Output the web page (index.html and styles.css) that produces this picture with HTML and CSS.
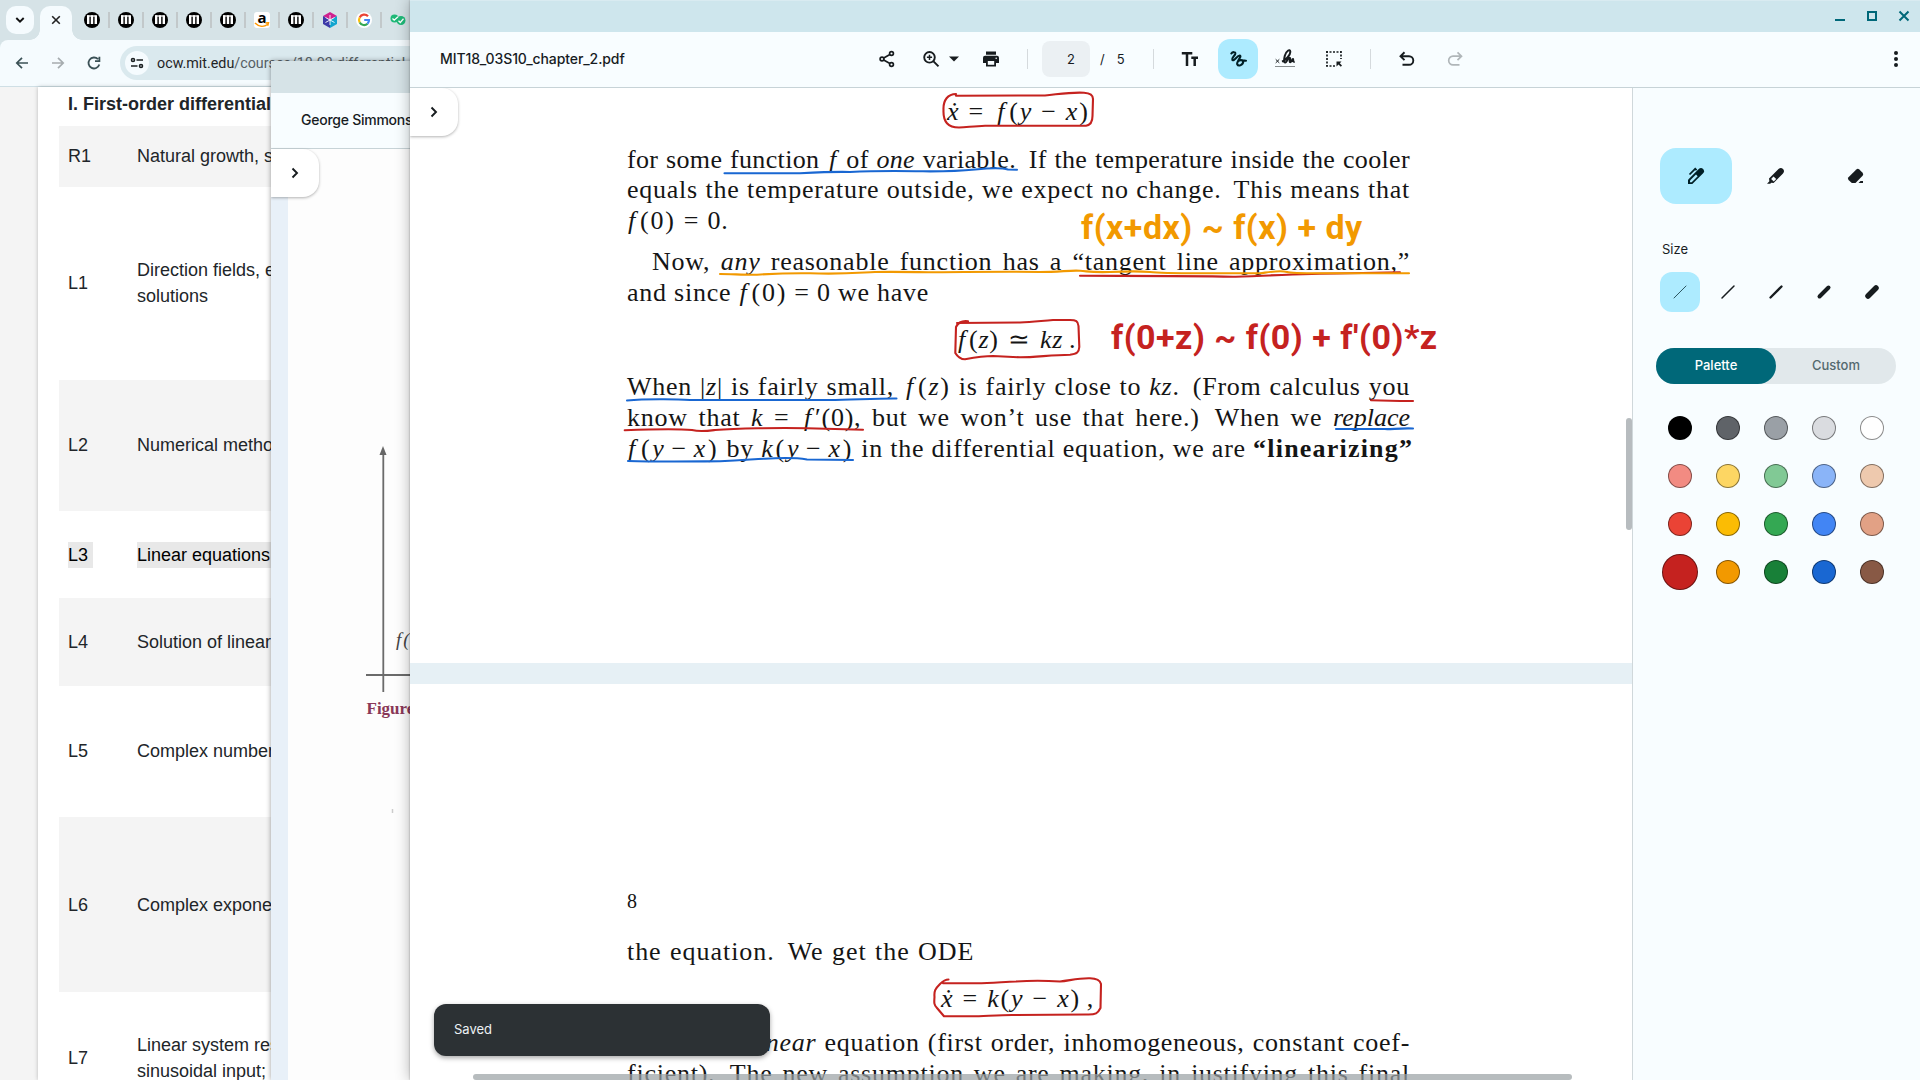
FILE: index.html
```html
<!DOCTYPE html>
<html lang="en">
<head>
<meta charset="utf-8">
<title>MIT18_03S10_chapter_2.pdf</title>
<link rel="stylesheet" href="styles.css">
</head>
<body>
<svg class="defs" width="0" height="0" aria-hidden="true">
  <symbol id="mit" viewBox="0 0 16 16"><circle cx="8" cy="8" r="8" fill="#000"/><path d="M4.200 3.300v8.700M8 3.300v8.700M11.800 3.300v8.700" stroke="#fff" stroke-width="2.400"/><path d="M3.100 4h8.500" stroke="#fff" stroke-width="1.200"/></symbol>
  <symbol id="chev" viewBox="0 0 16 16"><path d="M5.500 3.500l4.500 4.500L5.500 12.500" fill="none" stroke="#171c1f" stroke-width="1.900"/></symbol>
</svg>
<main class="desktop">

  <section class="window browser">
    <header class="tabs">
      <button class="tab-search"><svg width="10" height="10" viewBox="0 0 10 10"><path d="M1.300 3l3.700 3.700L8.700 3" fill="none" stroke="#111" stroke-width="1.900"/></svg></button>
      <div class="tab-active"><svg width="10" height="10" viewBox="0 0 10 10"><path d="M1.200 1.200l7.600 7.600M8.800 1.200L1.200 8.800" stroke="#222" stroke-width="1.600"/></svg></div>
      <div class="favs">
        <span><svg width="16" height="16"><use href="#mit"/></svg></span>
        <span><svg width="16" height="16"><use href="#mit"/></svg></span>
        <span><svg width="16" height="16"><use href="#mit"/></svg></span>
        <span><svg width="16" height="16"><use href="#mit"/></svg></span>
        <span><svg width="16" height="16"><use href="#mit"/></svg></span>
        <span><b class="amazon">a<svg width="16" height="6" viewBox="0 0 16 6"><path d="M1 1c4 4 9 4 12.500 1.500M11.500 1l3-.3-.8 3" fill="none" stroke="#f90" stroke-width="1.400"/></svg></b></span>
        <span><svg width="16" height="16"><use href="#mit"/></svg></span>
        <span><svg width="16" height="16" viewBox="0 0 16 16"><path d="M8 0l7 4-7 4-7-4z" fill="#d0218f"/><path d="M1 4l7 4v8l-7-4z" fill="#3d3aa8"/><path d="M15 4L8 8v8l7-4z" fill="#12a5cf"/><path d="M8 3v10M3.500 5.500l9 5M12.500 5.500l-9 5" stroke="#fff" stroke-width=".9"/></svg></span>
        <span><svg width="16" height="16" viewBox="0 0 16 16"><circle cx="8" cy="8" r="8" fill="#fff"/><g fill="none" stroke-width="2.200"><path d="M12 4.300A5 5 0 0 0 3.700 5.500" stroke="#ea4335"/><path d="M3.700 5.500a5 5 0 0 0 0 5" stroke="#fbbc04"/><path d="M3.700 10.500a5 5 0 0 0 7.800 1.200" stroke="#34a853"/><path d="M11.500 11.700A5 5 0 0 0 13 8H8.200" stroke="#4285f4"/></g></svg></span>
        <span><svg width="16" height="12" viewBox="0 0 16 12"><circle cx="4.500" cy="4.500" r="4" fill="#1fb978"/><circle cx="11" cy="6.500" r="4.500" fill="#1fb978"/><path d="M2.500 4.500l1.700 1.700L8 2.700M8.500 6.700l1.800 1.800 3.200-3.700" fill="none" stroke="#fff" stroke-width="1.300"/></svg></span>
      </div>
    </header>
    <nav class="address">
      <div class="nav-icons">
        <svg width="16" height="16" viewBox="0 0 16 16"><path d="M14 8H3M8 2.800L2.800 8 8 13.200" fill="none" stroke="#3b5156" stroke-width="1.700"/></svg>
        <svg width="16" height="16" viewBox="0 0 16 16"><path d="M2 8h11M8 2.800L13.200 8 8 13.200" fill="none" stroke="#a6acaf" stroke-width="1.700"/></svg>
        <svg width="16" height="16" viewBox="0 0 16 16"><path d="M13.300 9.500A5.500 5.500 0 1 1 12 4.200M13.400 1.800v4.400H9" fill="none" stroke="#3b5156" stroke-width="1.800"/></svg>
      </div>
      <div class="omnibox">
        <span class="site"><svg width="14" height="14" viewBox="0 0 14 14"><g fill="none" stroke="#1b2022" stroke-width="1.600"><circle cx="3" cy="4" r="1.500"/><path d="M6.500 4H13M1 10h6.500"/><circle cx="11" cy="10" r="1.500"/></g></svg></span>
        <span class="url">ocw.mit.edu<i>/courses/18-03-differential-equations</i></span>
      </div>
    </nav>
    <div class="course">
      <div class="course-sheet">
        <h3>I. First-order differential equations</h3>
        <div class="row r1 odd"><span>R1</span><span>Natural growth, separable</span></div>
        <div class="row l1"><span>L1</span><span>Direction fields, existence<br>solutions</span></div>
        <div class="row l2 odd"><span>L2</span><span>Numerical methods</span></div>
        <div class="row l3"><span><mark>L3&nbsp;</mark></span><span><mark>Linear equations, models</mark></span></div>
        <div class="row l4 odd"><span>L4</span><span>Solution of linear equations</span></div>
        <div class="row l5"><span>L5</span><span>Complex numbers</span></div>
        <div class="row l6 odd"><span>L6</span><span>Complex exponentials</span></div>
        <div class="row l7"><span>L7</span><span>Linear system response<br>sinusoidal input;</span></div>
      </div>
    </div>
  </section>

  <section class="window book">
    <div class="titlebar"></div>
    <div class="bar"><span class="filename">George Simmons</span></div>
    <div class="body">
      <div class="sheet">
        <svg width="122" height="931" viewBox="288 149 122 931">
          <path d="M383.300 452v240M366 675h44" stroke="#6b6b6b" stroke-width="1.800"/>
          <path d="M383 446l3.500 9h-7z" fill="#666"/>
          <text class="fx" x="396" y="646">f(x)</text>
          <text class="fig" x="366.500" y="714">Figure</text>
          <path d="M392.500 809v4" stroke="#ccc" stroke-width="1.500"/>
        </svg>
      </div>
      <button class="handle"><svg width="16" height="16"><use href="#chev"/></svg></button>
    </div>
  </section>

  <section class="window viewer">
    <div class="titlebar">
      <svg width="16" height="16" viewBox="0 0 16 16"><path d="M3 12h10" stroke="#006879" stroke-width="2"/></svg>
      <svg width="16" height="16" viewBox="0 0 16 16"><path d="M4 4h8v8H4z" fill="none" stroke="#006879" stroke-width="2"/></svg>
      <svg width="16" height="16" viewBox="0 0 16 16"><path d="M3.500 3.500l9 9M12.500 3.500l-9 9" stroke="#006879" stroke-width="2"/></svg>
    </div>
    <div class="bar">
      <span class="filename">MIT18_03S10_chapter_2.pdf</span>
      <div class="tools">
        <svg class="t-share" width="18" height="18" viewBox="0 0 18 18"><g fill="none" stroke="#171c1f" stroke-width="1.700"><circle cx="4" cy="9" r="1.900"/><circle cx="13.500" cy="3.500" r="1.900"/><circle cx="13.500" cy="14.500" r="1.900"/><path d="M5.700 8l6.200-3.500M5.700 10l6.200 3.500"/></g></svg>
        <svg class="t-zoom" width="18" height="18" viewBox="0 0 18 18"><g fill="none" stroke="#171c1f" stroke-width="1.900"><circle cx="7.500" cy="7.300" r="5.300"/><path d="M11.500 11.300l5 5"/><path d="M7.500 4.700v5.200M4.900 7.300h5.200" stroke-width="1.500"/></g></svg>
        <svg class="t-caret" width="10" height="6" viewBox="0 0 10 6"><path d="M0 .5h10L5 5.500z" fill="#171c1f"/></svg>
        <svg class="t-print" width="18" height="18" viewBox="0 0 18 18"><path d="M4 1.500h10v3.200H4zM3 5.700h12q2 0 2 2V13h-3v3.500H4V13H1V7.700q0-2 2-2z" fill="#171c1f"/><path d="M5.800 11h6.400v3.800H5.800z" fill="#f8fdff"/><circle cx="14.200" cy="8.200" r=".8" fill="#f8fdff"/></svg>
        <i class="sep s1"></i>
        <span class="pageno">2</span><span class="slash">/</span><span class="total">5</span>
        <i class="sep s2"></i>
        <svg class="t-text" width="18" height="16" viewBox="0 0 18 16"><path d="M.8 2.200h10.500M6 2.200V15M10.300 6.800H17M13.700 6.800V15" fill="none" stroke="#171c1f" stroke-width="2.500"/></svg>
        <button class="draw"><svg width="20" height="20" viewBox="0 0 20 20"><path d="M3.300 4.500C4.500 2.700 7.700 2.700 7.300 4.700C6.700 7.200 3.500 8.500 4.300 10.800C5.500 13.200 9.300 6.200 11.800 6.500C14.300 7.200 8.300 12.500 9.200 15.200C10.500 18 15.200 15.700 15.200 12.800C15 10.500 11.500 10.700 10 12.300M15 11.500C16 11.500 17 11.700 18 11.700" fill="none" stroke="#001f26" stroke-width="2.100" stroke-linecap="round"/></svg></button>
        <svg class="t-sign" width="20" height="20" viewBox="0 0 20 20"><path d="M7 12.700C11 11 15.500 5.500 15.300 2.700C15 -.5 11 2 9.800 6.800C8.700 11.300 8.700 13.800 10.300 13.500C12 13.200 13 8.800 14.600 8.800C16.300 8.800 13.500 13.300 15.300 13.300C16.700 13.200 17 9.700 18 10C18.600 11 17.300 13.300 19.700 12.700" fill="none" stroke="#171c1f" stroke-width="2"/><path d="M.7 10.300l3.600 3.600M4.300 10.300L.7 13.900" stroke="#171c1f"/><path d="M.5 17.500H20" stroke="#171c1f" stroke-width="1.100" stroke-dasharray="1 1"/></svg>
        <svg class="t-select" width="18" height="18" viewBox="0 0 18 18"><path d="M1 2h15M2 1v15M16 1v8M1 16h9" fill="none" stroke="#171c1f" stroke-width="1.700" stroke-dasharray="2 1.500"/><path d="M11.500 11.500h5l-1.700 1.700 2.200 2.300-1.200 1.200-2.300-2.200-2 2z" fill="#171c1f"/></svg>
        <i class="sep s3"></i>
        <svg class="t-undo" width="18" height="16" viewBox="0 0 18 16"><path d="M6.500 1.300L2.500 5.200l4 4M2.500 5.200h8.500a4.300 4.300 0 0 1 0 8.600H4.500" fill="none" stroke="#171c1f" stroke-width="1.900"/></svg>
        <svg class="t-redo" width="18" height="16" viewBox="0 0 18 16"><path d="M11.500 1.300l4 3.900-4 4M15.500 5.200H7a4.300 4.300 0 0 0 0 8.600h6.500" fill="none" stroke="#b0b6b9" stroke-width="1.700"/></svg>
        <svg class="t-more" width="4" height="18" viewBox="0 0 4 18"><g fill="#171c1f"><circle cx="2" cy="3" r="2"/><circle cx="2" cy="9" r="2"/><circle cx="2" cy="15" r="2"/></g></svg>
      </div>
    </div>

    <div class="work">
      <div class="pages">
        <article class="page first">
          <div class="line eq e1"><i>ẋ</i> = <i class="f">f</i><u>(</u><i>y</i> − <i>x</i><u>)</u></div>
          <div class="line full a1">for some function <i class="f">f</i> of <i>one</i> <span class="st">variable.</span> If the temperature inside the cooler</div>
          <div class="line full a2">equals the temperature outside, we expect no <span class="st">change.</span> This means that</div>
          <div class="line a3"><i class="f">f</i><u>(</u>0<u>)</u> = 0.</div>
          <div class="line full a4">Now, <i>any</i> reasonable function has a “tangent line approximation,”</div>
          <div class="line a5">and since <i class="f">f</i><u>(</u>0<u>)</u> = 0 we have</div>
          <div class="line eq e2"><i class="f">f</i>(<i>z</i>) ≃ <i>kz</i>&#8201;.</div>
          <div class="line full a6">When |<i>z</i>| is fairly small, <i class="f">f</i><u>(</u><i>z</i><u>)</u> is fairly close to <span class="st"><i>kz</i>.</span> (From calculus you</div>
          <div class="line full a7">know that <i>k</i> = <i class="f">f</i>′(0), but we won’t use that <span class="st">here.)</span> When we <i>replace</i></div>
          <div class="line full a8"><span><i class="f">f</i><u>(</u><i>y</i>&#8201;−&#8201;<i>x</i><u>)</u></span> by <span><i>k</i><u>(</u><i>y</i>&#8201;−&#8201;<i>x</i><u>)</u></span> in the differential equation, we are <b>“linearizing”</b></div>
        </article>
        <article class="page second">
          <div class="line p8">8</div>
          <div class="line b1">the <span class="st">equation.</span> We get the ODE</div>
          <div class="line eq e3"><i>ẋ</i> = <i>k</i><u>(</u><i>y</i> − <i>x</i><u>)</u>&#8201;,</div>
          <div class="line full b2"><i>linear</i> equation (first order, inhomogeneous, constant coef-</div>
          <div class="line full b3"><span class="st">ficient).</span> The new assumption we are making, in justifying this final</div>
        </article>
        <svg class="ink" width="1222" height="992" viewBox="410 88 1222 992">
          <g class="red">
            <path d="M956 94C948 94 943 100 943.500 110C943 122 948 127.500 959 127.500C968 127 975 126 985 125.700H1086C1091 125 1092.500 121 1092.500 116L1093 99C1093 95 1090 93 1084 92.700C1070 92 1060 94 1045 95.500L956 95.700"/>
            <path d="M968 321.300C962 320.500 958 323 956 327L955.300 353C957 356 961 359.300 965 359.300C972 358 984 356 993 356L1020 357.300C1036 357.300 1050 355 1070 354.700C1077 354 1079 352 1079.300 347L1078.500 326C1078 321 1076 320 1070 320H1053C1040 321 1032 322 1020 322.500L957 323"/>
            <path d="M948.500 979.500C945 979.500 943 981 940 984C935 989 934 991 934.500 997C934 1003 934 1005 937 1008L944 1016.300H972C985 1016 1000 1015 1012 1015L1086 1014.500C1096 1015 1098 1013 1100.500 1008L1101 984C1100 980 1097 978.500 1090 978.300C1078 978 1070 980.500 1060 981.500C1045 980.500 1030 980.500 1016 981.500C1003 982 990 983.300 977 983.300H943"/>
            <path d="M1080 275.700C1110 276 1180 275.500 1233 276.700C1260 276 1310 273.500 1337 273.500L1400 272.300"/>
            <path d="M1371 400.300L1400 401L1413 401"/>
            <path d="M624.700 430.300C650 429.300 680 429 692 430C700 432 707 431 715 430C735 428.500 780 427.500 807 428.300L863 429.700"/>
          </g>
          <g class="blue">
            <path d="M724.500 173.300H800C825 172 835 171.500 850 172C880 170.500 900 171 923 171.300C945 171.500 963 170.700 975 169.500C990 168 1003 168 1008 169.500L1017 169.700"/>
            <path d="M627 400.500C645 399 675 399 690 400H830C850 400 875 398.300 896.500 398.500"/>
            <path d="M1336 429H1385C1390 429.500 1400 428 1413 428.500"/>
            <path d="M628 461C660 462 690 461.500 720 461.300C745 460.500 755 458.700 765 458.700C785 457.500 800 458.300 807 459.500L853 460"/>
          </g>
          <path class="orange" d="M720 274C732 274 745 275 757 274.700C780 273.300 790 273 810 273.300C840 274.500 855 273 875 272C900 271.500 920 272.300 930 272.300C960 272 1010 271.500 1040 272C1060 272 1070 270 1080 270.700C1090 271.500 1090 272.500 1110 272C1130 271 1140 271 1150 272C1160 273.300 1170 273.300 1200 273.300H1260C1270 272 1280 270 1287 272C1290 273.300 1300 273.300 1320 273.300H1409"/>
        </svg>
        <div class="note n1">f(x+dx) ~ f(x) + dy</div>
        <div class="note n2">f(0+z) ~ f(0) + f'(0)*z</div>
        <div class="vbar"></div>
        <div class="hbar"></div>
        <button class="handle"><svg width="16" height="16"><use href="#chev"/></svg></button>
        <div class="toast">Saved</div>
      </div>

      <aside class="panel">
        <div class="pens">
          <button class="on"><svg width="18" height="18" viewBox="0 0 18 18"><path d="M1 17v-4.300L11.500 2.300q2.500-2.300 4.600-.2 2 2.200-.2 4.400L5.300 17z" fill="#001f26"/><path d="M3 15.200v-1.700l6-6 1.700 1.700-6 6z" fill="#adebff"/><path d="M2.500 7.500l5.700-5.700 1.400 1.400" fill="none" stroke="#001f26" stroke-width="1.700"/></svg></button>
          <button><svg width="18" height="18" viewBox="0 0 18 18"><path d="M0 16.800l2.400-2.600-.4-2.700L11.500 2.100q2.400-2 4.500-.1 2 2.200 0 4.400L6.600 16l-2.300-.3L3.200 16.800z" fill="#171c1f"/><path d="M4.100 12l2.400-2.600 2.700 2.500L6.800 14.400z" fill="#f8fdff"/></svg></button>
          <button><svg width="18" height="18" viewBox="0 0 18 18"><path d="M1.500 10.200L9.300 2.500q1.500-1.300 3 0l3.300 3.200q1.300 1.500 0 3L8.500 16H4.800L1.500 12.900q-1.200-1.300 0-2.700z" fill="#171c1f"/><path d="M11.500 16l2-2H16v2z" fill="#171c1f"/></svg></button>
        </div>
        <div class="label">Size</div>
        <div class="sizes">
          <button class="on"><svg width="20" height="20"><path d="M4 16L16 4" stroke="#2c5661" stroke-width="1"/></svg></button>
          <button><svg width="20" height="20"><path d="M4 16L16 4" stroke="#171c1f" stroke-width="1.500"/></svg></button>
          <button><svg width="20" height="20"><path d="M4.500 15.500l11-11" stroke="#171c1f" stroke-width="2.300"/></svg></button>
          <button><svg width="20" height="20"><path d="M5.500 14.500l9-9" stroke="#171c1f" stroke-width="4"/></svg></button>
          <button><svg width="20" height="20"><path d="M6 14l8-8" stroke="#171c1f" stroke-width="5.500"/></svg></button>
        </div>
        <div class="switch"><span class="on">Palette</span><span>Custom</span></div>
        <div class="swatches">
          <i style="background:#000"></i><i style="background:#5f6368"></i><i style="background:#9aa0a6"></i><i style="background:#dadce0"></i><i style="background:#fff"></i>
          <i style="background:#f28b82"></i><i style="background:#fdd663"></i><i style="background:#81c995"></i><i style="background:#8ab4f8"></i><i style="background:#eec9ae"></i>
          <i style="background:#ea4335"></i><i style="background:#fbbc04"></i><i style="background:#34a853"></i><i style="background:#4285f4"></i><i style="background:#e2a185"></i>
          <i class="big" style="background:#c5221f"></i><i style="background:#f29900"></i><i style="background:#188038"></i><i style="background:#1967d2"></i><i style="background:#885945"></i>
        </div>
      </aside>
    </div>
  </section>
</main>
</body>
</html>
```
FILE: styles.css
```css
* { box-sizing: border-box; }
body { margin: 0; font-family: Inter, sans-serif; color: #171c1f; }
button { border: 0; padding: 0; background: none; display: flex; align-items: center; justify-content: center; }
svg { display: block; }
.defs { position: absolute; }
.desktop { position: relative; width: 1920px; height: 1080px; overflow: hidden; }
.window { position: absolute; overflow: hidden; display: flex; flex-direction: column; }

/* course browser */
.browser { left: 0; top: 0; width: 600px; height: 1080px; background: #d6e3e7; }
.tabs { height: 40px; display: flex; padding: 6px 0 0 6px; flex: none; }
.tab-search { width: 28px; height: 28px; border-radius: 10px; background: #f5fbfe; margin-right: 6px; }
.tab-active { position: relative; width: 32px; height: 34px; border-radius: 10px 10px 0 0; background: #f5fbfe; display: flex; align-items: center; justify-content: center; padding-bottom: 6px; }
.tab-active::before, .tab-active::after { content: ""; position: absolute; bottom: 0; width: 10px; height: 10px; }
.tab-active::before { right: 100%; background: radial-gradient(circle at 0 0, transparent 9.5px, #f5fbfe 10px); }
.tab-active::after { left: 100%; background: radial-gradient(circle at 100% 0, transparent 9.5px, #f5fbfe 10px); }
.favs { display: flex; padding-left: 3px; height: 28px; }
.favs span { width: 34px; display: flex; align-items: center; justify-content: center; position: relative; }
.favs span::after { content: ""; position: absolute; right: -1px; top: 6px; width: 2px; height: 16px; background: #c2c8ca; }
.amazon { width: 16px; height: 16px; background: #fff; border-radius: 3px; font: bold 15px/10px "Open Sans", sans-serif; text-align: center; color: #000; }
.address { height: 47px; flex: none; display: flex; align-items: center; background: #f5fbfe; border-radius: 8px 0 0 0; border-bottom: 1px solid #cfdfe5; }
.nav-icons { display: flex; gap: 20px; padding-left: 14px; width: 120px; }
.omnibox { flex: 1; height: 34px; border-radius: 17px 0 0 17px; background: #dae9ee; display: flex; align-items: center; padding-left: 5px; white-space: nowrap; }
.site { width: 24px; height: 24px; border-radius: 12px; background: #f5fbfe; display: flex; align-items: center; justify-content: center; margin-right: 8px; }
.url { font: 14.3px Roboto, sans-serif; color: #1f2426; }
.url i { font-style: normal; color: #566064; }
.course { flex: 1; background: #f4f4f4; padding-left: 38px; }
.course-sheet { height: 993px; background: #fff; padding: 4px 0 0 21px; box-shadow: 0 0 4px rgba(0,0,0,.25); font: 18px/26px "Liberation Sans", Arial, sans-serif; color: #212529; }
.course-sheet h3 { margin: 0 0 9px; padding-left: 9px; font-size: 18px; line-height: 26px; white-space: nowrap; }
.row { display: grid; grid-template-columns: 69px 1fr; padding-left: 9px; align-items: center; white-space: nowrap; }
.odd { background: #f4f4f4; }
.r1 { height: 61px; } .l1 { height: 193px; } .l2 { height: 131px; } .l3 { height: 87px; }
.l4 { height: 88px; } .l5 { height: 131px; } .l6 { height: 175px; } .l7 { height: 132px; }
.r1, .l1, .l2, .l5 { padding-bottom: 2px; }
.row mark { background: #e8e8e8; color: #000; padding: 3px 0; }

/* shared parts of the two PDF windows */
.bar { height: 56px; flex: none; background: #f8fdff; border-bottom: 1px solid #c7d3d7; display: flex; align-items: center; font-weight: 500; font-size: 14px; white-space: nowrap; padding-bottom: 1px; }
.filename { letter-spacing: -.1px; padding-bottom: 1px; }
.handle { position: absolute; left: 0; top: 0; width: 48px; height: 48px; background: #fff; border-radius: 0 16px 16px 0; box-shadow: 0 1px 3px rgba(0,0,0,.3); }

/* textbook behind */
.book { left: 271px; top: 61px; width: 300px; height: 1019px; box-shadow: 0 0 5px rgba(0,0,0,.4); }
.book .titlebar { height: 32px; background: #d6e3e7; flex: none; }
.book .bar { padding-left: 30px; }
.book .filename { letter-spacing: -.25px; }
.book .body { position: relative; flex: 1; background: #e8f0f8; padding-left: 17px; }
.book .sheet { height: 100%; background: #fdfdfd; }
.fx { font: italic 19px "Liberation Serif", serif; letter-spacing: 2px; fill: #444; }
.fig { font: bold 17px "Liberation Serif", serif; fill: #8a3858; }

/* viewer in front */
.viewer { left: 410px; top: 0; width: 1510px; height: 1080px; box-shadow: 0 0 14px rgba(0,0,0,.3), 0 0 2px rgba(0,0,0,.3); }
.viewer .titlebar { height: 32px; flex: none; background: #cee6ed; border-top: 1px solid #d9ebf1; display: flex; justify-content: flex-end; gap: 16px; padding: 7px 8px 0 0; }
.viewer .bar { padding-left: 30px; }
.viewer .filename { width: 438px; }
.tools { flex: 1; display: flex; align-items: center; font-weight: 400; font-size: 13px; }
.tools svg { flex: none; }
.t-zoom { margin-left: 26px; }
.t-caret { margin-left: 9px; }
.t-print { margin-left: 23px; }
.sep { width: 1px; height: 20px; background: #d5dadd; flex: none; }
.s1 { margin-left: 27px; }
.pageno { margin-left: 14px; width: 48px; height: 36px; line-height: 36px; border-radius: 8px; background: #ebf0f3; text-align: center; padding-left: 10px; }
.slash { margin-left: 10px; }
.total { margin-left: 12px; }
.s2 { margin-left: 28px; }
.t-text { margin-left: 27px; }
.draw { margin-left: 19px; width: 40px; height: 40px; border-radius: 12px; background: #adebff; }
.t-sign { margin-left: 17px; }
.t-select { margin-left: 30px; }
.s3 { margin-left: 27px; }
.t-undo { margin-left: 27px; }
.t-redo { margin-left: 30px; }
.t-more { margin-left: auto; margin-right: 22px; }

.work { flex: 1; display: flex; min-height: 0; }
.pages { position: relative; width: 1222px; overflow: hidden; background: #e6f0f5; }
.page { background: #fff; padding-left: 217px; }
.page.first { height: 575px; padding-top: 9px; }
.page.second { height: 420px; margin-top: 21px; padding-top: 202px; }
.line { height: 30px; line-height: 30px; width: 783px; font-family: "Liberation Serif", "Times New Roman", serif; font-size: 26px; letter-spacing: .75px; white-space: nowrap; color: #151515; }
.line u { text-decoration: none; margin: 0 1px; }
.line b { letter-spacing: 1.2px; }
.full { text-align-last: justify; }
.st { margin-right: 5px; }
.f { margin: 0 3px 0 4px; }
.eq { word-spacing: 2px; }
.e1 { padding-left: 320px; }
.a1 { margin-top: 18px; letter-spacing: .35px; word-spacing: -1px; }
.a1 .f { margin: 0 2px; }
.a3 { margin-top: 1px; word-spacing: 1px; }
.a3 .f, .a8 .f { margin-left: 1px; }
.a4 { margin-top: 11px; padding-left: 25px; }
.a5 { margin-top: 1px; }
.a5 .f { margin-left: 1px; }
.e2 { margin-top: 17px; padding-left: 327px; word-spacing: 2px; }
.a6 { margin-top: 17px; }
.a7, .a8 { margin-top: 1px; }
.a7 i:last-child { letter-spacing: 0; }
.a8 span { letter-spacing: 1.2px; }
.a8 u { margin: 0 1.5px; }
.p8 { font-size: 20px; }
.b1 { margin-top: 21px; letter-spacing: .95px; word-spacing: 1px; }
.e3 { margin-top: 17px; padding-left: 314px; }
.b2 { margin-top: 14px; padding-left: 123px; letter-spacing: .7px; }
.b3 { margin-top: 1px; }
.ink { position: absolute; left: 0; top: 0; fill: none; stroke-width: 2.1; stroke-linecap: round; stroke-linejoin: round; }
.red { stroke: #c5221f; }
.blue { stroke: #1967d2; }
.orange { stroke: #f29900; }
.note { position: absolute; font: bold 34px/40px Roboto, sans-serif; letter-spacing: .5px; white-space: nowrap; }
.n1 { left: 671px; top: 119px; color: #f29900; }
.n2 { left: 701px; top: 229px; color: #c5221f; }
.vbar { position: absolute; right: 0; top: 330px; width: 6px; height: 112px; border-radius: 3px; background: #b7bcbf; }
.hbar { position: absolute; left: 63px; bottom: 0; width: 1099px; height: 6px; border-radius: 3px; background: rgba(155,162,165,.72); }
.toast { position: absolute; left: 24px; top: 916px; width: 336px; height: 52px; line-height: 51px; padding-left: 20px; border-radius: 12px; background: #2c3134; color: #edf1f4; font-size: 13px; box-shadow: 0 2px 5px rgba(0,0,0,.35); }

.panel { flex: 1; background: #f8fdff; border-left: 1px solid #d0d8db; padding: 60px 0 0 27px; }
.pens { display: flex; gap: 8px; margin-bottom: 36px; }
.pens button { width: 72px; height: 56px; border-radius: 16px; }
.on { background: #adebff; }
.label { font-size: 13px; line-height: 18px; padding-left: 2px; margin-bottom: 14px; }
.sizes { display: flex; gap: 8px; margin-bottom: 36px; }
.sizes button { width: 40px; height: 40px; border-radius: 12px; }
.sizes path { stroke-linecap: round; }
.switch { display: flex; width: 240px; height: 36px; margin: 0 0 20px -4px; border-radius: 18px; background: #e1e8eb; font: 500 13px/35px Inter, sans-serif; color: #54686e; text-align: center; }
.switch span { width: 120px; border-radius: 18px; }
.switch .on { background: #006879; color: #fff; }
.swatches { display: grid; grid-template-columns: repeat(5, 48px); grid-auto-rows: 48px; margin-left: -4px; place-items: center; }
.swatches i { width: 24px; height: 24px; border-radius: 50%; border: 1px solid rgba(0,0,0,.45); }
.swatches .big { width: 36px; height: 36px; }
```
